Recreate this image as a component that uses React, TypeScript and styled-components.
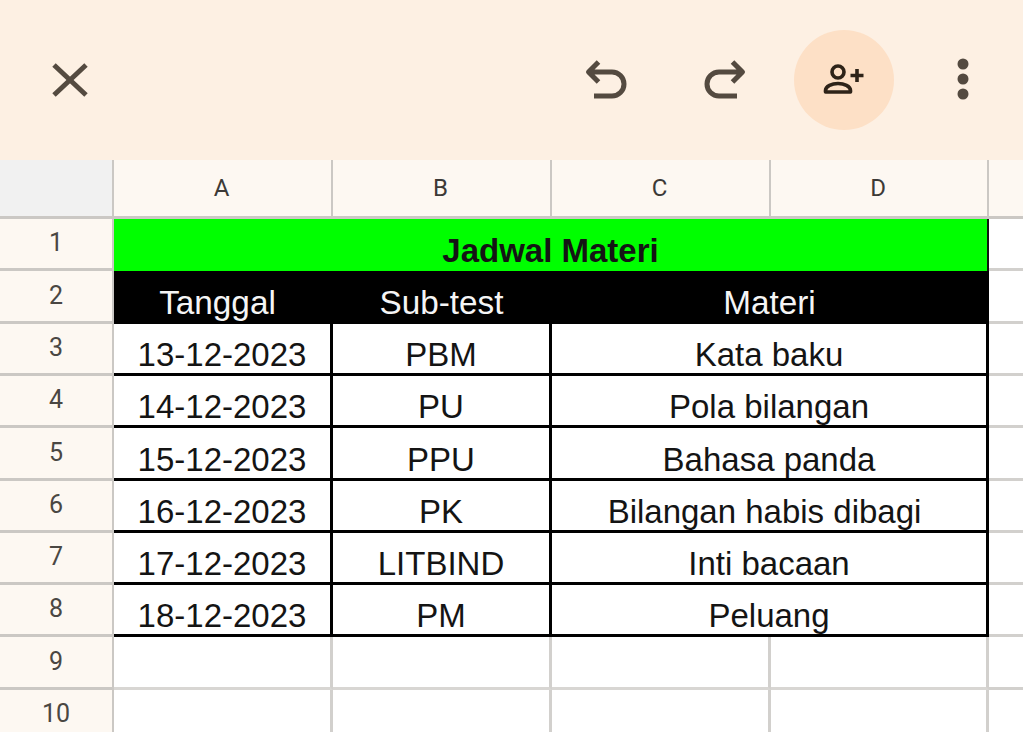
import React from "react";
import styled, { createGlobalStyle } from "styled-components";

const columns = ["A", "B", "C", "D"];

const schedule = [
  { date: "13-12-2023", test: "PBM", topic: "Kata baku" },
  { date: "14-12-2023", test: "PU", topic: "Pola bilangan" },
  { date: "15-12-2023", test: "PPU", topic: "Bahasa panda" },
  { date: "16-12-2023", test: "PK", topic: "Bilangan habis dibagi", shift: 9 },
  { date: "17-12-2023", test: "LITBIND", topic: "Inti bacaan" },
  { date: "18-12-2023", test: "PM", topic: "Peluang" },
];

const App = () => {
  return (
    <Page>
      <GlobalStyle />
      <Toolbar>
        <IconButton aria-label="Close">
          <Glyph viewBox="0 0 44 44">
            <path d="M6 7 L38 37 M38 7 L6 37" />
          </Glyph>
        </IconButton>
        <Actions>
          <IconButton aria-label="Undo">
            <Glyph viewBox="0 0 44 44">
              <path d="M14.5 4 L4.5 14 L14.5 24 M4.5 14 H28 A12 12 0 0 1 28 38 H10" />
            </Glyph>
          </IconButton>
          <IconButton aria-label="Redo">
            <Glyph viewBox="0 0 44 44" $flip>
              <path d="M14.5 4 L4.5 14 L14.5 24 M4.5 14 H28 A12 12 0 0 1 28 38 H10" />
            </Glyph>
          </IconButton>
          <IconButton aria-label="Share" $active>
            <Glyph viewBox="0 0 44 44" $dark>
              <circle cx="16" cy="14" r="6" />
              <path d="M3.5 34 V32.5 C3.5 28 10 25.5 16 25.5 C22 25.5 28.5 28 28.5 32.5 V34 Z" />
              <path d="M35 11 V24 M28.5 17.5 H41.5" />
            </Glyph>
          </IconButton>
          <IconButton aria-label="More">
            <Dots viewBox="0 0 44 44">
              <circle cx="22" cy="6" r="5.5" />
              <circle cx="22" cy="21" r="5.5" />
              <circle cx="22" cy="36" r="5.5" />
            </Dots>
          </IconButton>
        </Actions>
      </Toolbar>

      <Sheet>
        <Corner />
        {columns.map((c) => (
          <ColumnHead key={c}>{c}</ColumnHead>
        ))}
        <ColumnRest />

        <RowHead>1</RowHead>
        <TitleCell $span={4}>Jadwal Materi</TitleCell>
        <Blank />

        <RowHead>2</RowHead>
        <HeadCell $shift={12}>Tanggal</HeadCell>
        <HeadCell $shift={2}>Sub-test</HeadCell>
        <HeadCell $span={2} $shift={2}>Materi</HeadCell>
        <Blank />

        {schedule.map((row, i) => (
          <React.Fragment key={row.date}>
            <RowHead>{i + 3}</RowHead>
            <BodyCell>{row.date}</BodyCell>
            <BodyCell>{row.test}</BodyCell>
            <BodyCell $span={2} $shift={row.shift}>
              {row.topic}
            </BodyCell>
            <Blank />
          </React.Fragment>
        ))}

        {[9, 10].map((n) => (
          <React.Fragment key={n}>
            <RowHead>{n}</RowHead>
            <Empty />
            <Empty />
            <Empty />
            <Empty />
            <Blank />
          </React.Fragment>
        ))}
      </Sheet>
    </Page>
  );
};

const GlobalStyle = createGlobalStyle`
  html, body {
    margin: 0;
    padding: 0;
    height: 100%;
    overflow: hidden;
    background: #ffffff;
  }
`;

const Page = styled.div`
  width: 1023px;
  height: 732px;
  overflow: hidden;
  display: flex;
  flex-direction: column;
`;

const Toolbar = styled.header`
  height: 160px;
  flex: none;
  display: flex;
  align-items: center;
  justify-content: space-between;
  padding: 0 10px 0 20px;
  box-sizing: border-box;
  background: #fdf0e3;
`;

const Actions = styled.div`
  display: flex;
  align-items: center;
  gap: 19px;
`;

const IconButton = styled.button<{ $active?: boolean }>`
  width: 100px;
  height: 100px;
  padding: 0;
  border: 0;
  border-radius: 50%;
  display: flex;
  align-items: center;
  justify-content: center;
  background: ${(p) => (p.$active ? "#fde0c6" : "transparent")};
`;

const Glyph = styled.svg<{ $flip?: boolean; $dark?: boolean }>`
  width: 44px;
  height: 44px;
  fill: none;
  stroke: ${(p) => (p.$dark ? "#2e2318" : "#544a40")};
  stroke-width: ${(p) => (p.$dark ? 3.6 : 5)};
  stroke-linejoin: round;
  transform: ${(p) => (p.$flip ? "scaleX(-1)" : "none")};
`;

const Dots = styled.svg`
  width: 44px;
  height: 44px;
  fill: #544a40;
`;

const Sheet = styled.div`
  flex: none;
  display: grid;
  grid-template-columns: 114px 219px 219px 219px 218px 34px;
  grid-template-rows: 59px 52px 53px 52px 52px 53px 52px 52px 52px 53px 52px;
  font-family: "Liberation Sans", Arial, sans-serif;
  color: #141414;
`;

const Corner = styled.div`
  background: #f1f1f1;
  border-right: 2px solid #cbc8c4;
  border-bottom: 3px solid #cbc8c4;
`;

const ColumnHead = styled.div`
  background: #fdf8f2;
  border-right: 2px solid #cbc8c4;
  border-bottom: 3px solid #cbc8c4;
  display: flex;
  align-items: center;
  justify-content: center;
  padding-right: 2px;
  font-family: Roboto, sans-serif;
  font-size: 24px;
  color: #3c3a37;
`;

const ColumnRest = styled.div`
  background: #fdf8f2;
  border-bottom: 3px solid #cbc8c4;
`;

const RowHead = styled.div`
  background: #fdf8f2;
  border-right: 2px solid #cbc8c4;
  border-bottom: 3px solid #cbc8c4;
  display: flex;
  align-items: center;
  justify-content: center;
  padding-bottom: 2px;
  font-family: Roboto, sans-serif;
  font-size: 25px;
  color: #4a4743;
`;

const DataCell = styled.div<{ $span?: number; $shift?: number }>`
  grid-column: span ${(p) => p.$span ?? 1};
  display: flex;
  align-items: flex-end;
  justify-content: center;
  padding-right: ${(p) => p.$shift ?? 0}px;
  white-space: nowrap;
`;

const TitleCell = styled(DataCell)`
  background: #00ff00;
  border-right: 2px solid #111111;
  font-size: 33px;
  font-weight: 700;
  line-height: 40px;
`;

const HeadCell = styled(DataCell)`
  background: #000000;
  color: #f5f5f5;
  font-size: 33.3px;
  line-height: 42px;
`;

const BodyCell = styled(DataCell)`
  background: #ffffff;
  border-right: 3px solid #000000;
  border-bottom: 3px solid #000000;
  font-size: 33px;
  line-height: 36px;
`;

const Empty = styled.div`
  background: #ffffff;
  border-right: 3px solid #d2d0cd;
  border-bottom: 3px solid #d8d6d3;
`;

const Blank = styled.div`
  background: #ffffff;
  border-bottom: 3px solid #d2d0cd;
`;

export default App;
